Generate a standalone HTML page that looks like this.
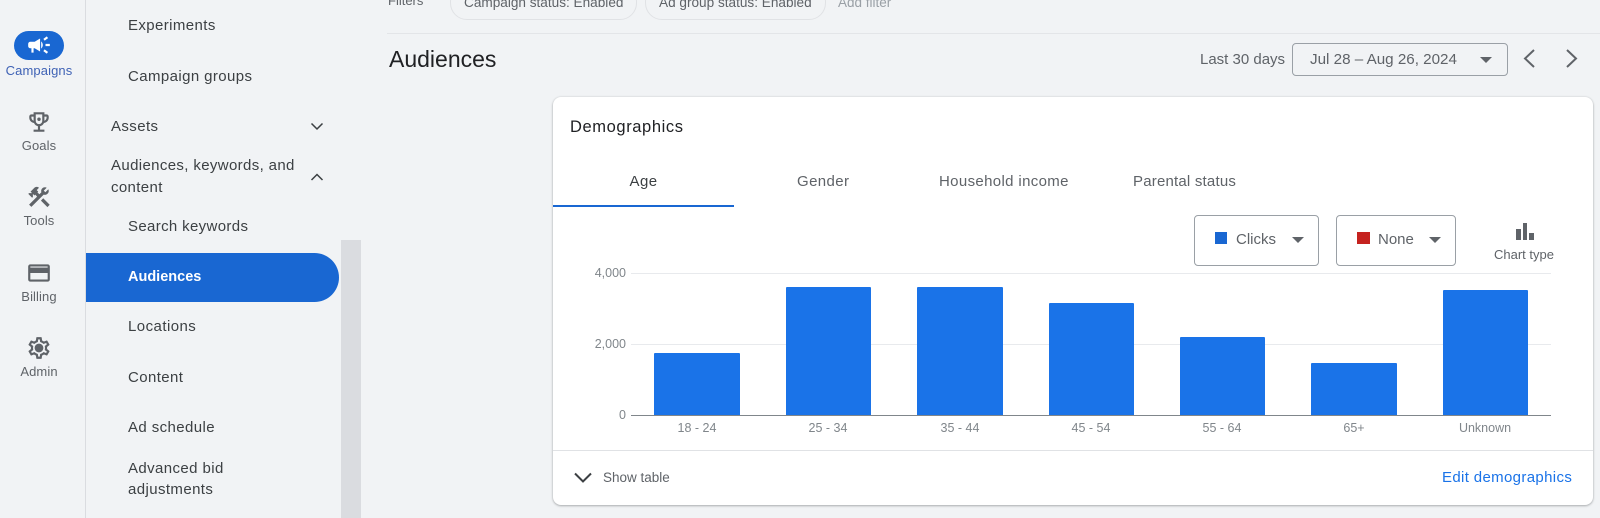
<!DOCTYPE html>
<html><head><meta charset="utf-8"><style>
html,body{margin:0;padding:0;width:1600px;height:518px;overflow:hidden;background:#f1f3f5}
body{position:relative;font-family:"Liberation Sans",sans-serif;color:#3c4043}
.a{position:absolute}
.t{position:absolute;white-space:nowrap;line-height:20px}
.n{font-size:15px;letter-spacing:.4px;color:#3c4043}
.r{position:absolute;left:0;width:78px;text-align:center;font-size:13px;line-height:16px;color:#5f6368;letter-spacing:.1px}
.i{position:absolute;width:26px;height:26px;left:26px;fill:#5f6368}
.c{font-size:12.5px;color:#80868b;text-align:center}
.b{position:absolute;background:#1a73e8;border-radius:1px 1px 0 0}
.g{position:absolute;left:631px;width:920px;height:1px;background:#e8eaed}
.box{position:absolute;box-sizing:border-box;border:1px solid #9aa0a6;border-radius:4px;background:#fff}
.tri{position:absolute;width:0;height:0;border-left:6px solid transparent;border-right:6px solid transparent;border-top:6px solid #5f6368}
</style></head><body>
<!-- rail -->
<div class="a" style="left:85px;top:0;width:1px;height:518px;background:#dadce0"></div>
<div class="a" style="left:14px;top:31px;width:50px;height:29px;border-radius:15px;background:#1967d2"></div>
<svg class="i" style="top:32px;fill:#fff" viewBox="0 0 24 24"><path d="M18 11v2h4v-2h-4zm-2 6.61c.96.71 2.21 1.65 3.2 2.39.4-.53.8-1.07 1.2-1.6-.99-.74-2.24-1.68-3.2-2.4-.4.54-.8 1.08-1.2 1.61zM20.4 5.6c-.4-.53-.8-1.07-1.2-1.6-.99.74-2.24 1.68-3.2 2.4.4.53.8 1.07 1.2 1.6.96-.72 2.21-1.65 3.2-2.4zM4 9c-1.1 0-2 .9-2 2v2c0 1.1.9 2 2 2h1v4h2v-4h1l5 3V6L8 9H4zm11.5 3c0-1.33-.58-2.53-1.5-3.35v6.69c.92-.81 1.5-2.01 1.5-3.34z"/></svg>
<div class="r" style="top:63px;color:#3f62b5">Campaigns</div>
<svg class="i" style="top:109px" viewBox="0 0 24 24"><path d="M19 5h-2V3H7v2H5c-1.1 0-2 .9-2 2v1c0 2.55 1.92 4.63 4.39 4.94.63 1.5 1.98 2.63 3.61 2.96V19H7v2h10v-2h-4v-3.1c1.63-.33 2.98-1.46 3.61-2.96C19.08 12.63 21 10.55 21 8V7c0-1.1-.9-2-2-2zM5 8V7h2v3.82C5.84 10.4 5 9.3 5 8zm7 6c-1.65 0-3-1.35-3-3V5h6v6c0 1.65-1.35 3-3 3zm7-6c0 1.3-.84 2.4-2 2.82V7h2v1z"/><circle cx="12" cy="9.5" r="1.6"/></svg>
<div class="r" style="top:138px">Goals</div>
<svg class="i" style="top:184px" viewBox="0 0 24 24"><path d="M13.78 15.3l6 6 2.11-2.16-6-6-2.11 2.16zM17.5 10c1.93 0 3.5-1.57 3.5-3.5 0-.58-.16-1.12-.41-1.6l-2.7 2.7-1.49-1.49 2.7-2.7c-.48-.25-1.02-.41-1.6-.41C15.57 3 14 4.57 14 6.5c0 .41.08.8.21 1.16l-1.85 1.85-1.78-1.78.71-.71-1.41-1.41L12 3.49c-1.17-1.17-3.07-1.17-4.24 0L4.22 7.03l1.41 1.41H2.81l-.71.71 3.54 3.54.71-.71V9.15l1.41 1.41.71-.71 1.78 1.78-7.41 7.41 2.12 2.12L16.34 9.79c.36.13.75.21 1.16.21z"/></svg>
<div class="r" style="top:213px">Tools</div>
<svg class="i" style="top:260px" viewBox="0 0 24 24"><path d="M20 4H4c-1.11 0-1.99.89-1.99 2L2 18c0 1.11.89 2 2 2h16c1.11 0 2-.89 2-2V6c0-1.11-.89-2-2-2zm0 14H4v-6h16v6zm0-10H4V6h16v2z"/><rect x="3" y="7" width="18" height="3"/></svg>
<div class="r" style="top:289px">Billing</div>
<svg class="i" style="top:335px" viewBox="0 0 24 24"><path d="M19.43 12.98c.04-.32.07-.64.07-.98 0-.34-.03-.66-.07-.98l2.11-1.65c.19-.15.24-.42.12-.64l-2-3.46c-.09-.16-.26-.25-.44-.25-.06 0-.12.01-.17.03l-2.49 1c-.52-.4-1.08-.73-1.69-.98l-.38-2.65C14.46 2.18 14.25 2 14 2h-4c-.25 0-.46.18-.49.42l-.38 2.65c-.61.25-1.17.59-1.69.98l-2.49-1c-.06-.02-.12-.03-.18-.03-.17 0-.34.09-.43.25l-2 3.46c-.13.22-.07.49.12.64l2.11 1.65c-.04.32-.07.65-.07.98 0 .33.03.66.07.98l-2.11 1.65c-.19.15-.24.42-.12.64l2 3.46c.09.16.26.25.44.25.06 0 .12-.01.17-.03l2.49-1c.52.4 1.08.73 1.69.98l.38 2.65c.03.24.24.42.49.42h4c.25 0 .46-.18.49-.42l.38-2.65c.61-.25 1.17-.59 1.69-.98l2.49 1c.06.02.12.03.18.03.17 0 .34-.09.43-.25l2-3.46c.12-.22.07-.49-.12-.64l-2.11-1.65zm-1.98-1.71c.04.31.05.52.05.73 0 .21-.02.43-.05.73l-.14 1.13.89.7 1.08.84-.7 1.21-1.27-.51-1.04-.42-.9.68c-.43.32-.84.56-1.25.73l-1.06.43-.16 1.13-.2 1.35h-1.4l-.19-1.35-.16-1.13-1.06-.43c-.43-.18-.83-.41-1.23-.71l-.91-.7-1.06.43-1.27.51-.7-1.21 1.08-.84.89-.7-.14-1.13c-.03-.31-.05-.54-.05-.74s.02-.43.05-.73l.14-1.13-.89-.7-1.08-.84.7-1.21 1.27.51 1.04.42.9-.68c.43-.32.84-.56 1.25-.73l1.06-.43.16-1.13.2-1.35h1.39l.19 1.35.16 1.13 1.06.43c.43.18.83.41 1.23.71l.91.7 1.06-.43 1.27-.51.7 1.21-1.07.85-.89.7.14 1.13zM12 8c-2.21 0-4 1.79-4 4s1.79 4 4 4 4-1.79 4-4-1.79-4-4-4zm0 6c-1.1 0-2-.9-2-2s.9-2 2-2 2 .9 2 2-.9 2-2 2z"/><circle cx="12" cy="12" r="2.5"/></svg>
<div class="r" style="top:364px">Admin</div>
<!-- nav -->
<div class="a" style="left:341px;top:240px;width:20px;height:278px;background:#dadce0"></div>
<div class="a" style="left:86px;top:253px;width:253px;height:49px;background:#1967d2;border-radius:0 25px 25px 0"></div>
<div class="t n" style="left:128px;top:16px">Experiments</div>
<div class="t n" style="left:128px;top:66.500px">Campaign groups</div>
<div class="t n" style="left:111px;top:116.500px">Assets</div>
<svg class="a" style="left:308px;top:121px" width="18" height="12" viewBox="0 0 18 12"><path d="M3.500 2.500 9 8l5.500-5.500" fill="none" stroke="#3c4043" stroke-width="1.500"/></svg>
<div class="t n" style="left:111px;top:155px;line-height:21.500px;white-space:normal;width:200px;letter-spacing:.36px">Audiences, keywords, and<br>content</div>
<svg class="a" style="left:308px;top:171px" width="18" height="12" viewBox="0 0 18 12"><path d="M3.500 9 9 3.500 14.500 9" fill="none" stroke="#3c4043" stroke-width="1.500"/></svg>
<div class="t n" style="left:128px;top:217px;letter-spacing:.35px">Search keywords</div>
<div class="t n" style="left:128px;top:267px;color:#fff;font-weight:bold;letter-spacing:0;font-size:14.500px">Audiences</div>
<div class="t n" style="left:128px;top:317px;letter-spacing:.45px">Locations</div>
<div class="t n" style="left:128px;top:367.500px">Content</div>
<div class="t n" style="left:128px;top:418px">Ad schedule</div>
<div class="t n" style="left:128px;top:457.500px;line-height:21.500px;white-space:normal;width:200px">Advanced bid<br>adjustments</div>
<!-- top filter -->
<div class="t" style="left:388px;top:-9px;font-size:13px;color:#5f6368">Filters</div>
<div class="a" style="left:450px;top:-15px;width:185px;height:33px;border:1px solid #e0e2e5;border-radius:17px"></div>
<div class="a" style="left:645px;top:-15px;width:179px;height:33px;border:1px solid #e0e2e5;border-radius:17px"></div>
<div class="t" style="left:464px;top:-7px;font-size:13.600px;color:#5f6368">Campaign status: Enabled</div>
<div class="t" style="left:659px;top:-7px;font-size:13.600px;color:#5f6368">Ad group status: Enabled</div>
<div class="t" style="left:838px;top:-7px;font-size:13.500px;color:#9aa0a6">Add filter</div>
<div class="a" style="left:387px;top:33px;width:1213px;height:1px;background:#e3e5e8"></div>
<div class="t" style="left:389px;top:48px;font-size:23px;color:#202124;line-height:22px">Audiences</div>
<div class="t" style="left:1200px;top:50px;font-size:15px;color:#5f6368">Last 30 days</div>
<div class="box" style="left:1292px;top:43px;width:216px;height:33px;background:#f1f3f5;border-color:#9aa0a6"></div>
<div class="t" style="left:1310px;top:50px;font-size:15.200px;color:#5f6368">Jul 28 – Aug 26, 2024</div>
<div class="tri" style="left:1480px;top:57px"></div>
<svg class="a" style="left:1520px;top:48px" width="60" height="22" viewBox="0 0 60 22"><path d="M14 2 5 10.500l9 8.500M47 2l9 8.500-9 8.500" fill="none" stroke="#5f6368" stroke-width="2"/></svg>
<!-- card -->
<div class="a" style="left:553px;top:97px;width:1040px;height:408px;background:#fff;border-radius:8px;box-shadow:0 1px 2px rgba(60,64,67,.35),0 0 2px rgba(60,64,67,.15)"></div>
<div class="t" style="left:570px;top:117px;font-size:16.500px;color:#202124;letter-spacing:.6px">Demographics</div>
<div class="t" style="left:553px;top:172px;width:181px;text-align:center;font-size:15px;color:#3c4043;letter-spacing:.4px">Age</div>
<div class="a" style="left:553px;top:205px;width:181px;height:1.500px;background:#1967d2"></div>
<div class="t" style="left:797px;top:172px;font-size:15px;color:#5f6368;letter-spacing:.4px">Gender</div>
<div class="t" style="left:939px;top:172px;font-size:15px;color:#5f6368;letter-spacing:.35px">Household income</div>
<div class="t" style="left:1133px;top:172px;font-size:15px;color:#5f6368;letter-spacing:.2px">Parental status</div>
<!-- selectors -->
<div class="box" style="left:1194px;top:215px;width:125px;height:51px"></div>
<div class="a" style="left:1215px;top:232px;width:12px;height:12px;background:#1967d2"></div>
<div class="t" style="left:1236px;top:230px;font-size:15px;color:#5f6368">Clicks</div>
<div class="tri" style="left:1292px;top:237px"></div>
<div class="box" style="left:1336px;top:215px;width:120px;height:51px"></div>
<div class="a" style="left:1357px;top:232px;width:13px;height:12px;background:#c5221f"></div>
<div class="t" style="left:1378px;top:230px;font-size:15px;color:#5f6368">None</div>
<div class="tri" style="left:1429px;top:237px"></div>
<div class="a" style="left:1516px;top:229px;width:4.500px;height:11px;background:#5f6368"></div>
<div class="a" style="left:1522.500px;top:223px;width:4.500px;height:17px;background:#5f6368"></div>
<div class="a" style="left:1529px;top:233px;width:4.500px;height:7px;background:#5f6368"></div>
<div class="t" style="left:1494px;top:245px;font-size:13px;color:#5f6368">Chart type</div>
<!-- chart -->
<div class="g" style="top:273px"></div>
<div class="g" style="top:344px"></div>
<div class="t c" style="left:579px;top:263px;width:47px;text-align:right">4,000</div>
<div class="t c" style="left:579px;top:334px;width:47px;text-align:right">2,000</div>
<div class="t c" style="left:579px;top:405px;width:47px;text-align:right">0</div>
<div class="b" style="left:654px;top:353px;width:86px;height:62px"></div>
<div class="b" style="left:786px;top:287px;width:85px;height:128px"></div>
<div class="b" style="left:917px;top:287px;width:86px;height:128px"></div>
<div class="b" style="left:1049px;top:303px;width:85px;height:112px"></div>
<div class="b" style="left:1180px;top:337px;width:85px;height:78px"></div>
<div class="b" style="left:1311px;top:363px;width:86px;height:52px"></div>
<div class="b" style="left:1443px;top:290px;width:85px;height:125px"></div>
<div class="a" style="left:631px;top:415px;width:920px;height:1px;background:#80868b"></div>
<div class="t c" style="left:647px;top:417.500px;width:100px">18 - 24</div>
<div class="t c" style="left:778px;top:417.500px;width:100px">25 - 34</div>
<div class="t c" style="left:910px;top:417.500px;width:100px">35 - 44</div>
<div class="t c" style="left:1041px;top:417.500px;width:100px">45 - 54</div>
<div class="t c" style="left:1172px;top:417.500px;width:100px">55 - 64</div>
<div class="t c" style="left:1304px;top:417.500px;width:100px">65+</div>
<div class="t c" style="left:1435px;top:417.500px;width:100px">Unknown</div>
<!-- footer -->
<div class="a" style="left:553px;top:450px;width:1040px;height:1px;background:#e0e2e5"></div>
<svg class="a" style="left:573px;top:471px" width="20" height="14" viewBox="0 0 20 14"><path d="M2 2.500 10 10.500 18 2.500" fill="none" stroke="#3c4043" stroke-width="2"/></svg>
<div class="t" style="left:603px;top:468px;font-size:13.500px;color:#5f6368">Show table</div>
<div class="t" style="left:1442px;top:468px;font-size:15px;color:#1a73e8;letter-spacing:.35px">Edit demographics</div>
</body></html>
